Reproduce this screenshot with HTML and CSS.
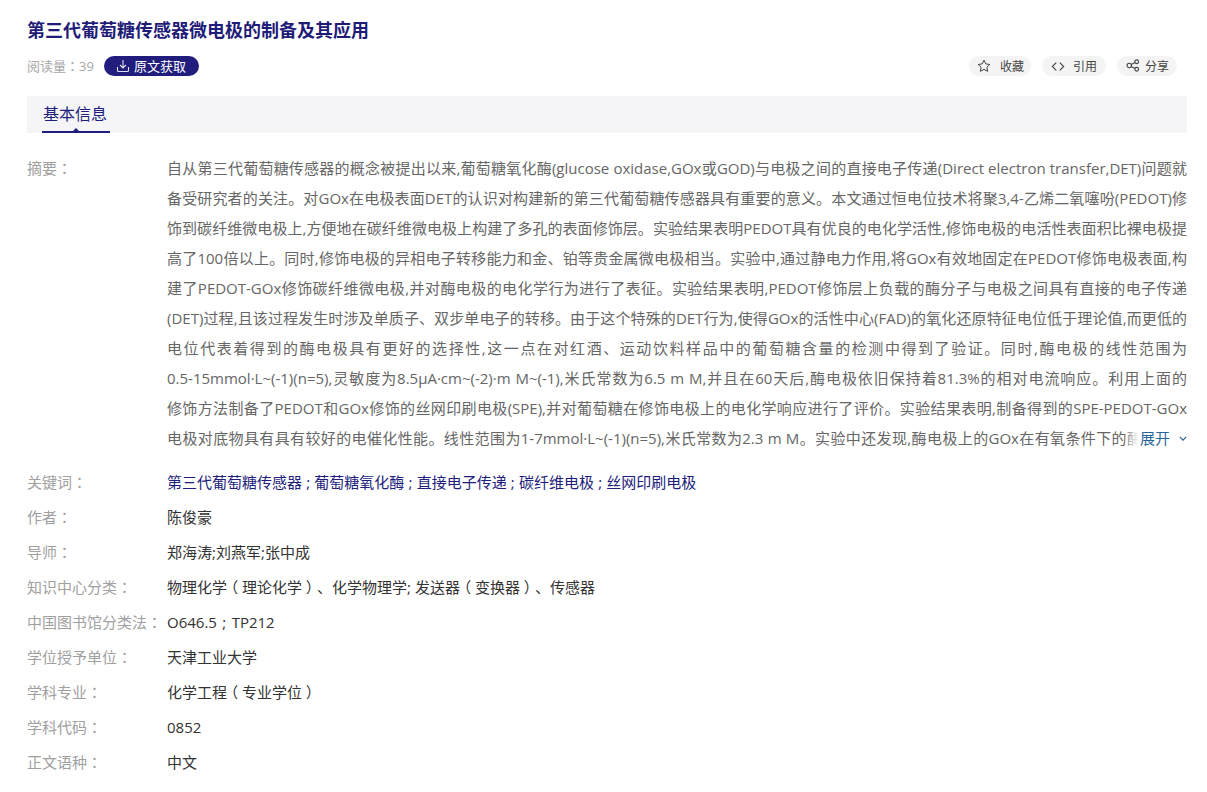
FILE: index.html
```html
<!DOCTYPE html>
<html lang="zh-CN">
<head>
<meta charset="utf-8">
<title>第三代葡萄糖传感器微电极的制备及其应用</title>
<link rel="stylesheet" href="styles.css">
</head>
<body>
<main class="page">
  <h1 class="title">第三代葡萄糖传感器微电极的制备及其应用</h1>
  <div class="meta">
    <span class="reads">阅读量<span class="p" lang="zh-TW">：</span>39</span>
    <a class="get-btn">
      <svg class="get-icon" viewBox="0 0 14 14" width="14" height="14" fill="none" stroke="currentColor" stroke-width="1.1"><path d="M7 1v8M4 6l3 3 3-3M1.5 8v3.5a1 1 0 0 0 1 1h9a1 1 0 0 0 1-1V8"/></svg>
      <span>原文获取</span>
    </a>
    <div class="actions">
      <a class="pill pill-fav">
        <svg viewBox="0 0 14 14" width="14" height="14" fill="none" stroke="currentColor" stroke-width="1"><path d="M7 1.2l1.8 3.7 4 .6-2.9 2.8.7 4L7 10.4l-3.6 1.9.7-4L1.2 5.5l4-.6z"/></svg>
        <span>收藏</span>
      </a>
      <a class="pill pill-cite">
        <svg viewBox="0 0 16 12" width="14" height="11" fill="none" stroke="currentColor" stroke-width="1.3"><path d="M6 1.5L1.5 6 6 10.5M10 1.5L14.5 6 10 10.5"/></svg>
        <span>引用</span>
      </a>
      <a class="pill pill-share">
        <svg class="share-icon" viewBox="0 0 15 14" width="14" height="13" fill="none" stroke="currentColor" stroke-width="1.2"><circle cx="3.5" cy="7" r="2.4"/><circle cx="11.5" cy="3" r="2"/><circle cx="11.5" cy="11" r="2"/><path d="M5.6 5.9l4.1-2M5.6 8.1l4.1 2"/></svg>
        <span>分享</span>
      </a>
    </div>
  </div>
  <nav class="tabs"><span class="tab">基本信息</span></nav>
  <section class="info">
    <div class="row row-abstract">
      <div class="label">摘要<span class="p" lang="zh-TW">：</span></div>
      <div class="abstract">
        <div class="line">自从第三代葡萄糖传感器的概念被提出以来,葡萄糖氧化酶(glucose oxidase,GOx或GOD)与电极之间的直接电子传递(Direct electron transfer,DET)问题就</div>
        <div class="line">备受研究者的关注。对GOx在电极表面DET的认识对构建新的第三代葡萄糖传感器具有重要的意义。本文通过恒电位技术将聚3,4-乙烯二氧噻吩(PEDOT)修</div>
        <div class="line">饰到碳纤维微电极上,方便地在碳纤维微电极上构建了多孔的表面修饰层。实验结果表明PEDOT具有优良的电化学活性,修饰电极的电活性表面积比裸电极提</div>
        <div class="line">高了100倍以上。同时,修饰电极的异相电子转移能力和金、铂等贵金属微电极相当。实验中,通过静电力作用,将GOx有效地固定在PEDOT修饰电极表面,构</div>
        <div class="line">建了PEDOT-GOx修饰碳纤维微电极,并对酶电极的电化学行为进行了表征。实验结果表明,PEDOT修饰层上负载的酶分子与电极之间具有直接的电子传递</div>
        <div class="line">(DET)过程,且该过程发生时涉及单质子、双步单电子的转移。由于这个特殊的DET行为,使得GOx的活性中心(FAD)的氧化还原特征电位低于理论值,而更低的</div>
        <div class="line">电位代表着得到的酶电极具有更好的选择性,这一点在对红酒、运动饮料样品中的葡萄糖含量的检测中得到了验证。同时,酶电极的线性范围为</div>
        <div class="line">0.5-15mmol·L~(-1)(n=5),灵敏度为8.5μA·cm~(-2)·m M~(-1),米氏常数为6.5 m M,并且在60天后,酶电极依旧保持着81.3%的相对电流响应。利用上面的</div>
        <div class="line">修饰方法制备了PEDOT和GOx修饰的丝网印刷电极(SPE),并对葡萄糖在修饰电极上的电化学响应进行了评价。实验结果表明,制备得到的SPE-PEDOT-GOx</div>
        <div class="line line-last">电极对底物具有具有较好的电催化性能。线性范围为1-7mmol·L~(-1)(n=5),米氏常数为2.3 m M。实验中还发现,酶电极上的GOx在有氧条件下的酶</div>
        <a class="more">展开<svg viewBox="0 0 10 6" width="8" height="5" fill="none" stroke="currentColor" stroke-width="1.6"><path d="M1 1l4 4 4-4"/></svg></a>
      </div>
    </div>
    <div class="row"><div class="label">关键词<span class="p" lang="zh-TW">：</span></div><div class="value keywords">第三代葡萄糖传感器 ; 葡萄糖氧化酶 ; 直接电子传递 ; 碳纤维电极 ; 丝网印刷电极</div></div>
    <div class="row"><div class="label">作者<span class="p" lang="zh-TW">：</span></div><div class="value">陈俊豪</div></div>
    <div class="row"><div class="label">导师<span class="p" lang="zh-TW">：</span></div><div class="value">郑海涛;刘燕军;张中成</div></div>
    <div class="row"><div class="label">知识中心分类<span class="p" lang="zh-TW">：</span></div><div class="value">物理化学<span class="par">（</span>理论化学<span class="par">）</span>、化学物理学; 发送器<span class="par">（</span>变换器<span class="par">）</span>、传感器</div></div>
    <div class="row"><div class="label">中国图书馆分类法<span class="p" lang="zh-TW">：</span></div><div class="value code">O646.5 ; TP212</div></div>
    <div class="row"><div class="label">学位授予单位<span class="p" lang="zh-TW">：</span></div><div class="value">天津工业大学</div></div>
    <div class="row"><div class="label">学科专业<span class="p" lang="zh-TW">：</span></div><div class="value">化学工程<span class="par">（</span>专业学位<span class="par">）</span></div></div>
    <div class="row"><div class="label">学科代码<span class="p" lang="zh-TW">：</span></div><div class="value">0852</div></div>
    <div class="row"><div class="label">正文语种<span class="p" lang="zh-TW">：</span></div><div class="value">中文</div></div>
  </section>
</main>
</body>
</html>
```
FILE: styles.css
```css
* { box-sizing: border-box; }
html, body { margin: 0; padding: 0; background: #fff; }
body {
  font-family: "Open Sans", "Noto Sans CJK SC", sans-serif;
  font-size: 15px;
  color: #333;
  overflow: hidden;
  text-spacing-trim: space-all;
}
.p { font-family: "Noto Sans CJK TC", sans-serif; line-height: 1; }
.par { font-feature-settings: "halt"; padding: 0 3.75px; }
.page { width: 1207px; height: 792px; padding: 15px 20px 0 27px; overflow: hidden; }
.title { margin: 0; font-size: 18px; line-height: 30px; font-weight: 700; color: #1f1c78; }
.meta { display: flex; align-items: center; height: 20px; margin-top: 11px; }
.reads { font-size: 13px; color: #a8a8a8; line-height: 20px; }
.get-btn {
  display: flex; align-items: center; gap: 4px;
  height: 20px; width: 95px; margin-left: 10px; padding-left: 12px;
  border-radius: 10px; background: #211d7c; color: #fff; font-size: 13px; line-height: 20px;
}
.get-icon { color: #dfdff2; flex: none; }
.actions { display: flex; gap: 11px; margin-left: auto; margin-right: 10px; }
.pill {
  display: flex; align-items: center; height: 20px; padding: 0 0 0 9px;
  border-radius: 10px; background: #f4f4f4; color: #444; font-size: 12px; line-height: 20px; white-space: nowrap;
}
.pill span { padding-top: 2px; }
.pill-fav { width: 62px; gap: 9px; padding-left: 8px; }
.pill-cite { width: 64px; gap: 8px; }
.pill-share { width: 60px; gap: 5px; }
.share-icon { margin-bottom: 2px; }
.tabs { height: 37px; margin-top: 20px; background: #f5f5f7; padding-left: 15px; }
.tab {
  position: relative; display: inline-block; height: 37px; padding: 0 3px 0 1px;
  font-size: 16px; line-height: 36px; color: #211d7c; border-bottom: 2px solid #211d7c;
}
.tab::after {
  content: ""; position: absolute; left: 50%; bottom: 0; margin-left: -3px;
  border: 3px solid transparent; border-top: 0; border-bottom-color: #211d7c;
}
.info { margin-top: 20px; }
.row { display: flex; line-height: 35px; min-height: 35px; }
.label { flex: 0 0 140px; color: #a0a0a0; white-space: nowrap; }
.value { flex: 1; color: #333; }
.keywords { color: #211d7c; word-spacing: 0.3px; }
.code { word-spacing: 1.5px; }
.row-abstract { line-height: 30px; margin-bottom: 12px; }
.abstract { position: relative; flex: 1; color: #666; min-width: 0; }
.line { text-align: justify; text-align-last: justify; height: 30px; overflow: hidden; }
.line-last { padding-right: 45px; }
.more {
  position: absolute; right: 0; bottom: 0; display: flex; align-items: center; gap: 9px;
  padding-left: 16px; height: 30px; color: #2a6598;
  background: linear-gradient(to right, rgba(255,255,255,0), #fff 14px);
}
```
